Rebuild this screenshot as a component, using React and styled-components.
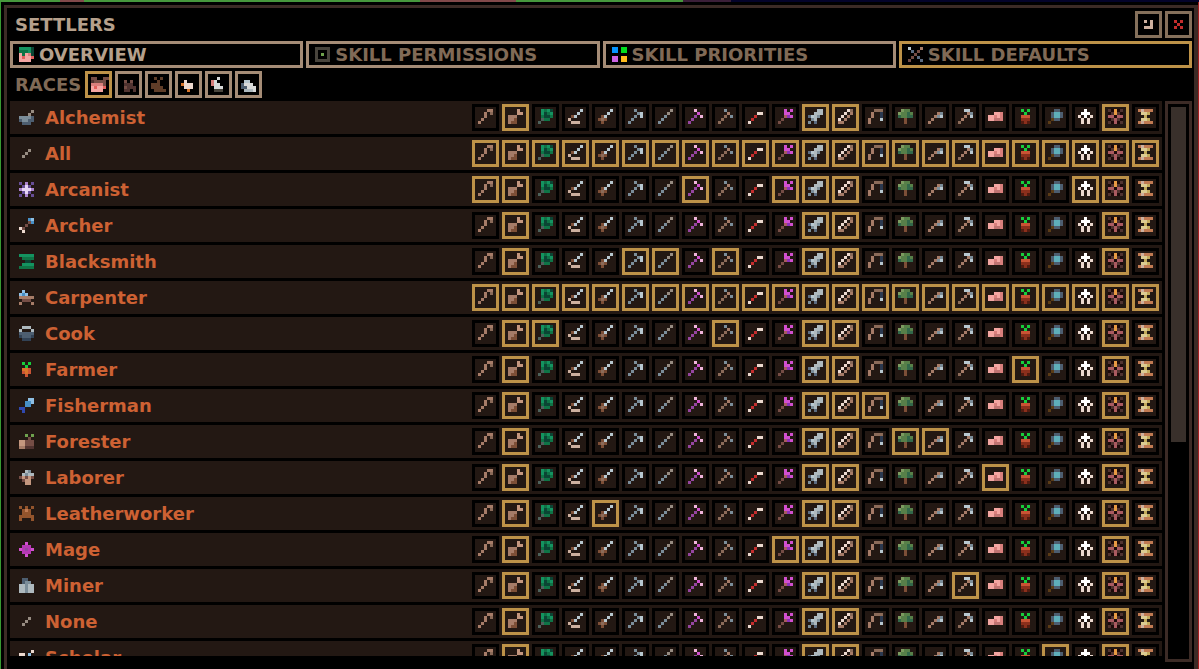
import React, { useState } from 'react';
import styled, { createGlobalStyle } from 'styled-components';

const GlobalStyle = createGlobalStyle`
  * { box-sizing: border-box; }
  body {
    margin: 0;
    background: #000;
    overflow: hidden;
  }
  button {
    margin: 0;
    font: inherit;
    cursor: pointer;
  }
`;

// One letter per pixel, a dot is see-through.
const colors = {
  a: '#a67c68', b: '#8b6b59', c: '#c4977f', d: '#5f3d28', e: '#cdb09f',
  f: '#ecd9cf', g: '#0f7446', G: '#149360', h: '#0b4534', i: '#4d625c',
  j: '#b8c8d0', k: '#7b8d99', l: '#5b6b80', m: '#d24fd0', n: '#9545a0',
  o: '#e79a43', p: '#f4a6a2', q: '#d97f7c', r: '#e25f5c', s: '#c42d2d',
  t: '#7d4f37', u: '#f0b4dc', v: '#8a31b8', w: '#ffffff', x: '#1c0a0a',
  y: '#dccb92', Y: '#c3ab5c', z: '#5eaeba', A: '#754d45', B: '#503330',
  C: '#a95a60', D: '#2b3950', E: '#32684a', F: '#578049', H: '#7c9b60',
  I: '#16cf3c', J: '#c95334', K: '#8b2f1c', L: '#521b10', M: '#c07472',
  N: '#c07a52', O: '#d8752a', P: '#4d5e70', Q: '#5b3c16', R: '#978c82',
  S: '#4790c7', T: '#8fbfe3', U: '#674e96', V: '#ab83ce', W: '#e6d5f3',
  X: '#aeb9be', Z: '#48443c', 1: '#0594ff', 2: '#00dc1e', 3: '#cc63e3',
  4: '#ffbb1c', 5: '#6fa24e', 6: '#324255', 7: '#93542c', 8: '#3048ae',
  9: '#b538b5', 0: '#d9dada',
};

const art = {
  staff: ['...aa', '..a.b', '..a..', '.a...', 'a....'],
  sack: ['...c.', '...cc', 'aaa..', 'aat..', 'att..'],
  lens: ['.GgGh', '.GhgG', '.ghhg', '.igg.', 'i....'],
  knife: ['....j', '...j.', '.tj..', 'e....', '.eee.'],
  dagger: ['....j', '...j.', '.tj..', 'tbt..', '.t...'],
  hammer: ['..k..', '...kj', '..k.j', '.k...', 'k....'],
  rod: ['....R', '...R.', '..k..', '.k...', 'k....'],
  amethyst: ['..u..', '...m.', '..n.u', '.n...', 'n....'],
  adze: ['..k..', '...a.', '..b.k', '.b...', 'b....'],
  wand: ['.....', '...ff', '..s..', '.s...', 'f....'],
  scepter: ['..m.m', '..mm.', '..Cvm', '.A...', 'A....'],
  blade: ['...XX', '..XXX', 'ljXk.', '.kX..', 'k.l..'],
  bow: ['...fb', '..f.a', '.f.a.', 'f.a..', 'aa...'],
  rodline: ['..bbb', '.a..D', '.a..D', 'a...j', 'a....'],
  tree: ['.HFF.', 'HFFEF', 'EFFEE', '..t..', '..t..'],
  shovel: ['.....', '...ak', '..akj', '.a...', 'a....'],
  pick: ['..jj.', '...ak', '..a.j', '.a...', 'b....'],
  meat: ['.....', '..ppq', 'ppqpq', 'ppMMq', '.....'],
  plant: ['.I.I.', '..I..', '.JJJ.', '.KKK.', '.LKL.'],
  glass: ['..PP.', '.PzzP', '.PzzP', '.QPP.', 'Q....'],
  person: ['..w..', '.www.', 'f.w.f', '.f.f.', '.f.f.'],
  rune: ['BxoxB', 'xBoBx', 'CCxCC', 'xBCBx', 'BxCxB'],
  hourglass: ['NeNNN', '.yyY.', '..Y..', '.yyY.', 'NeNNN'],

  mortar: ['....R', '...R.', 'kkkkP', 'PkkPP', '.PPP.'],
  slash: ['.....', '...R.', '..R..', '.R...', '.....'],
  star: ['U.V.U', '.UWU.', 'VWWWV', '.UWU.', 'U.V.U'],
  arrow: ['...ST', '...AS', '..A..', 'fA...', '.f...'],
  anvil: ['GGGGG', '.gggg', '..hh.', '.GGGG', 'ggggg'],
  bench: ['.T...', 'TST..', 'aaaaa', '.AAA.', 'a...a'],
  pot: ['.XXX.', 'X...X', 'PPPPP', '6PPP6', '.666.'],
  carrot: ['.I.I.', '..I..', '.OOJ.', '.JOJ.', '..J..'],
  fish: ['...TT', '..SST', '..SS.', '88...', '.8...'],
  logs: ['..5.5', '...A.', 'ccAAA', 'ccAAA', 'aaBBB'],
  helmet: ['..Xk.', '.XkXX', 'AcAcA', '.Acc.', '..cc.'],
  hide: ['7.7.7', '.7N7.', '.777.', '77777', '7...7'],
  gem: ['..m..', '.999.', 'm9n9m', '.999.', '..m..'],
  rocks: ['.PP..', '.Pkk.', 'XXkXX', 'XXkXX', 'XXkXX'],
  quill: ['....f', 'ff.T.', 'fcTf.', 'ffcf.', '.ff..'],

  face: ['GGGGh', 'gggGh', 'pgpqh', 'prppr', 'pppp.'],
  target: ['ZZZZZ', 'Z...Z', 'Z.5.Z', 'Z...Z', 'ZZZZZ'],
  swords: ['j...a', '.l.A.', '..A..', '.A.l.', 'A...l'],
  human: ['AA..AA', 'BAAAA.', 'qqqqA.', 'prppr.', 'pppp..'],
  cat: ['.....', '.A.A.', '.BBB.', '.ABBB', '.BB.B'],
  bear: ['.d.d.', '..d..', 'ddd..', 'dddd.', '.dddd'],
  chicken: ['.....', '.f...', 'Offf.', '.fff.', '..O..'],
  goose: ['..0..', 'q0...', 'q00..', '.000.', '.ZZZ.'],
  sheep: ['.....', '.jj..', 'P000.', 'PP000', '.XXX0'],
  restore: ['e.e', '..e', 'eee'],
  cross: ['s.s', '.s.', 's.s'],
};

const skills = [
  'staff', 'sack', 'lens', 'knife', 'dagger', 'hammer', 'rod', 'amethyst',
  'adze', 'wand', 'scepter', 'blade', 'bow', 'rodline', 'tree', 'shovel',
  'pick', 'meat', 'plant', 'glass', 'person', 'rune', 'hourglass',
];

const every = skills.map((s, i) => i);
const base = [1, 11, 12, 21];

const jobs = [
  { name: 'Alchemist', icon: 'mortar', on: base },
  { name: 'All', icon: 'slash', on: every },
  { name: 'Arcanist', icon: 'star', on: [...base, 0, 7, 10, 20] },
  { name: 'Archer', icon: 'arrow', on: base },
  { name: 'Blacksmith', icon: 'anvil', on: [...base, 5, 6, 8] },
  { name: 'Carpenter', icon: 'bench', on: every },
  { name: 'Cook', icon: 'pot', on: [...base, 2, 8] },
  { name: 'Farmer', icon: 'carrot', on: [...base, 18] },
  { name: 'Fisherman', icon: 'fish', on: [...base, 13] },
  { name: 'Forester', icon: 'logs', on: [...base, 14, 15] },
  { name: 'Laborer', icon: 'helmet', on: [...base, 17] },
  { name: 'Leatherworker', icon: 'hide', on: [...base, 4] },
  { name: 'Mage', icon: 'gem', on: [...base, 10] },
  { name: 'Miner', icon: 'rocks', on: [...base, 16] },
  { name: 'None', icon: 'slash', on: base },
  { name: 'Scholar', icon: 'quill', on: [...base, 19] },
];

const tabs = [
  { name: 'OVERVIEW', icon: 'face' },
  { name: 'SKILL PERMISSIONS', icon: 'target' },
  { name: 'SKILL PRIORITIES', icon: 'squares' },
  { name: 'SKILL DEFAULTS', icon: 'swords' },
];

const races = ['human', 'cat', 'bear', 'chicken', 'goose', 'sheep'];

const Icon = ({ name }) => {
  if (name === 'squares') {
    return (
      <Sprite width="15" height="15" viewBox="0 0 15 15" aria-hidden="true">
        <rect width="6" height="6" fill={colors[1]} />
        <rect x="9" width="6" height="6" fill={colors[2]} />
        <rect y="9" width="6" height="6" fill={colors[3]} />
        <rect x="9" y="9" width="6" height="6" fill={colors[4]} />
      </Sprite>
    );
  }
  const rows = art[name];
  const size = rows.length;
  return (
    <Sprite width={size * 3} height={size * 3} viewBox={`0 0 ${size} ${size}`} aria-hidden="true">
      {rows.map((row, y) => row.split('').map((p, x) => (
        p === '.' ? null : <rect key={`${x}-${y}`} x={x} y={y} width="1" height="1" fill={colors[p]} />
      )))}
    </Sprite>
  );
};

const JobRow = ({ job }) => {
  const [on, setOn] = useState(job.on);

  const toggle = (i) => {
    setOn(on.includes(i) ? on.filter((n) => n !== i) : [...on, i]);
  };

  return (
    <Row>
      <Job>
        <Icon name={job.icon} />
        {job.name}
      </Job>
      <Skills>
        {skills.map((skill, i) => (
          <SkillButton
            key={skill}
            aria-label={skill}
            aria-pressed={on.includes(i)}
            $on={on.includes(i)}
            onClick={() => toggle(i)}
          >
            <Icon name={skill} />
          </SkillButton>
        ))}
      </Skills>
    </Row>
  );
};

const App = () => {
  const [tab, setTab] = useState(0);
  const [race, setRace] = useState(0);

  return (
    <World>
      <GlobalStyle />
      <Window>
        <Frame>
          <Header>
            <Title>SETTLERS</Title>
            <WindowButton aria-label="Restore"><Icon name="restore" /></WindowButton>
            <WindowButton aria-label="Close"><Icon name="cross" /></WindowButton>
          </Header>
          <Tabs>
            {tabs.map((t, i) => (
              <Tab key={t.name} $active={i === tab} $gold={i === 3} onClick={() => setTab(i)}>
                <Icon name={t.icon} />
                {t.name}
              </Tab>
            ))}
          </Tabs>
          <Races>
            <RacesLabel>RACES</RacesLabel>
            {races.map((r, i) => (
              <RaceButton key={r} aria-label={r} aria-pressed={i === race} $on={i === race} onClick={() => setRace(i)}>
                <Icon name={r} />
              </RaceButton>
            ))}
          </Races>
          <Body>
            <List>
              {jobs.map((job) => <JobRow key={job.name} job={job} />)}
            </List>
            <Track><Thumb /></Track>
          </Body>
        </Frame>
      </Window>
    </World>
  );
};

const Sprite = styled.svg`
  display: block;
  flex: none;
  overflow: visible;
  shape-rendering: crispEdges;
`;

const World = styled.div`
  height: 100vh;
  padding: 2px 1px 0;
  background:
    linear-gradient(90deg, #47983d 5%, #82494a 5% 7%, #47983d 7% 10%, #47983d 10% 35%, #82494a 35% 43%, #47983d 43% 57%, #3b1f38 57% 61%, #03032a 61%) top / 100% 2px no-repeat,
    linear-gradient(90deg, #389a31 50%, #a11d1d 50%);
  font: bold 18px/27px "DejaVu Sans", sans-serif;
`;

const Window = styled.div`
  height: 100%;
  padding: 3px 0 0 3px;
  background: #000;
`;

const Frame = styled.main`
  display: flex;
  flex-direction: column;
  gap: 3px;
  height: 100%;
  padding: 3px 2px 7px 3px;
  border: solid #3c2b26;
  border-width: 3px 4px 0 3px;
`;

const Header = styled.header`
  display: flex;
  gap: 3px;
  padding-left: 5px;
`;

const Title = styled.h1`
  flex: 1;
  margin: 0;
  font-size: 18px;
  color: #b5a08c;
`;

const Square = styled.button`
  display: flex;
  flex: none;
  align-items: center;
  justify-content: center;
  width: 27px;
  height: 27px;
  padding: 0;
  border: 3px solid;
`;

const WindowButton = styled(Square)`
  border-color: #85705b;
  background: #000;
`;

const Tabs = styled.nav`
  display: flex;
  gap: 3px;
`;

const Tab = styled.button`
  display: flex;
  flex: 1 1 0;
  align-items: center;
  gap: 5px;
  min-width: 0;
  height: 27px;
  padding: 0 6px;
  border: 3px solid ${(p) => (p.$gold ? '#bd9248' : '#a58c76')};
  background: #000;
  color: ${(p) => (p.$active ? '#b5a08c' : '#806a56')};
  white-space: nowrap;
`;

const Races = styled.div`
  display: flex;
  gap: 3px;
  padding-left: 5px;
`;

const RacesLabel = styled.span`
  width: 67px;
  color: #806a56;
`;

const RaceButton = styled(Square)`
  border-color: ${(p) => (p.$on ? '#bd9248' : '#a58c76')};
  background: #000;
`;

const Body = styled.div`
  display: flex;
  flex: 1;
  gap: 3px;
  min-height: 0;
`;

const List = styled.ul`
  display: flex;
  flex: 1;
  flex-direction: column;
  gap: 3px;
  margin: 0 0 6px;
  padding: 0;
  list-style: none;
  overflow: hidden;
`;

const Row = styled.li`
  display: flex;
  flex: none;
  justify-content: space-between;
  padding: 3px 3px 3px 9px;
  background: #231813;
`;

const Job = styled.div`
  display: flex;
  align-items: center;
  gap: 11px;
  color: #cd6133;
`;

const Skills = styled.div`
  display: flex;
  gap: 3px;
`;

const SkillButton = styled(Square)`
  padding-bottom: 2px;
  border-color: ${(p) => (p.$on ? '#bd9248' : '#000')};
  background: #231813;
`;

const Track = styled.div`
  flex: none;
  width: 27px;
  padding: 3px;
  border: 3px solid #3c2b26;
`;

const Thumb = styled.div`
  height: 61%;
  background: #39302b;
`;

export default App;
